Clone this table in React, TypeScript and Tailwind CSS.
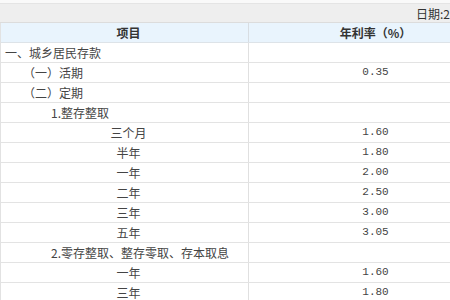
const rows: { label: string; rate: string; kind: "l0" | "l1" | "l2" | "c" }[] = [
  { label: "一、城乡居民存款", rate: "", kind: "l0" },
  { label: "（一）活期", rate: "0.35", kind: "l1" },
  { label: "（二）定期", rate: "", kind: "l1" },
  { label: "1.整存整取", rate: "", kind: "l2" },
  { label: "三个月", rate: "1.60", kind: "c" },
  { label: "半年", rate: "1.80", kind: "c" },
  { label: "一年", rate: "2.00", kind: "c" },
  { label: "二年", rate: "2.50", kind: "c" },
  { label: "三年", rate: "3.00", kind: "c" },
  { label: "五年", rate: "3.05", kind: "c" },
  { label: "2.零存整取、整存零取、存本取息", rate: "", kind: "l2" },
  { label: "一年", rate: "1.60", kind: "c" },
  { label: "三年", rate: "1.80", kind: "c" },
  { label: "五年", rate: "2.00", kind: "c" },
];

const labelClass = {
  l0: "pl-[4px]",
  l1: "pl-[22px]",
  l2: "pl-[50px]",
  c: "pl-[8px] text-center",
};

export default function App() {
  return (
    <div
      className="w-[450px] h-[300px] overflow-hidden bg-white text-[12px] text-[#444]"
      style={{ fontFamily: '"Noto Sans CJK SC", "Noto Sans", sans-serif' }}
    >
      <div className="w-[502px]">
        <div className="h-[4px] bg-[#f9f9f9] border-b border-[#e4e4e4]" />
        <div className="h-[19px] bg-[#eeeeee] border-b border-[#dcdcdc] pl-[416px] leading-[19px] whitespace-nowrap text-[#333]">
          日期:2015-10-24
        </div>
        <div className="border-l border-[#e2e2e2]">
          <div className="flex h-[20px] bg-[#e9f4fd] border-b border-[#dde3e8] font-bold leading-[19px] text-[#333]">
            <div className="w-[248px] pl-[8px] text-center border-r border-[#d8dde2]">项目</div>
            <div className="flex-1 text-center">年利率（%）</div>
          </div>
          {rows.map((r, i) => (
            <div key={i} className="flex h-[20px] border-b border-[#e3e3e3] leading-[19px]">
              <div className={`w-[248px] border-r border-[#e0e0e0] whitespace-nowrap ${labelClass[r.kind]}`}>
                {r.label}
              </div>
              <div
                className="flex-1 text-center text-[11px]"
                style={{ fontFamily: '"Liberation Mono", monospace' }}
              >
                {r.rate}
              </div>
            </div>
          ))}
        </div>
      </div>
    </div>
  );
}
